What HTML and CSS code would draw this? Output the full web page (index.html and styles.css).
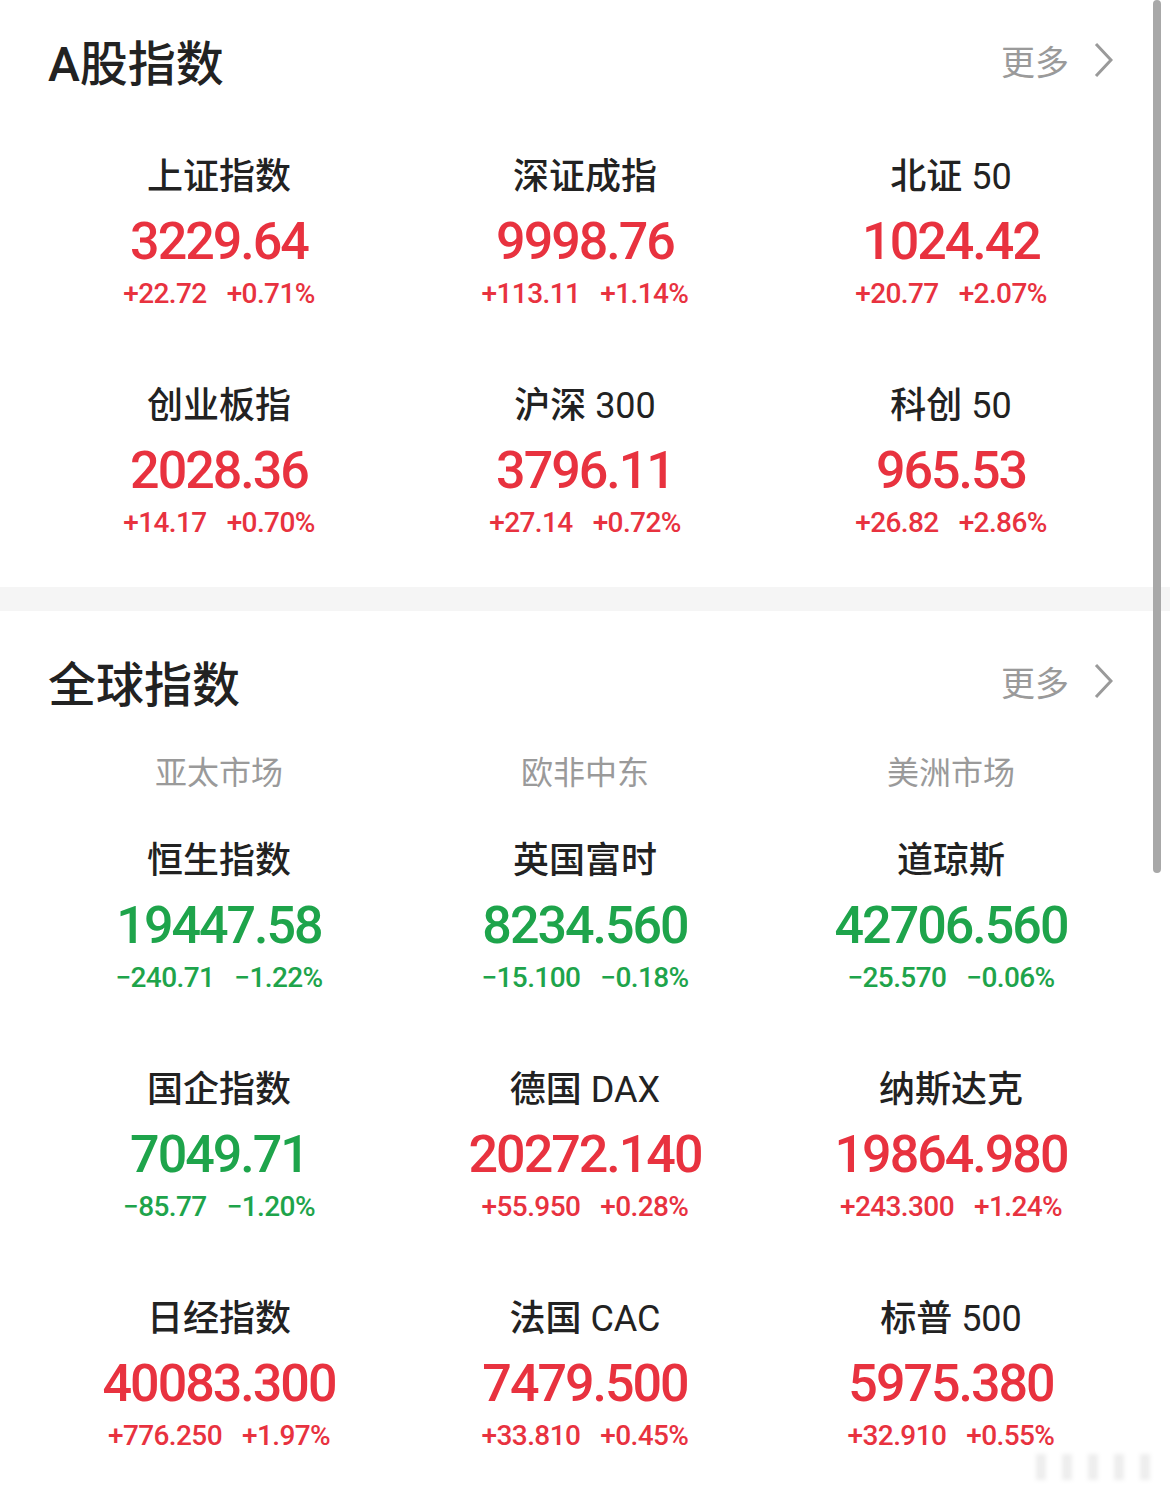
FILE: index.html
```html
<!DOCTYPE html>
<html lang="zh-CN">

<head>
    <meta charset="UTF-8">
    <meta name="viewport" content="width=device-width, initial-scale=1.0">
    <title>指数</title>
    <link rel="stylesheet" href="styles.css">
</head>

<body>
    <!-- A股指数 -->
    <div class="section section-a">
        <div class="section-head">
            <h2 class="section-title">A股指数</h2>
            <a class="more" href="#">更多
                <svg class="chevron" viewBox="0 0 20 36" width="20" height="36">
                    <polyline points="3,2 18,18 3,34" fill="none" stroke="#9a9a9a" stroke-width="3" />
                </svg>
            </a>
        </div>
        <div class="grid">
            <div class="tile">
                <div class="name">上证指数</div>
                <div class="value up">3229.64</div>
                <div class="change up"><span>+22.72</span><span>+0.71%</span></div>
            </div>
            <div class="tile">
                <div class="name">深证成指</div>
                <div class="value up">9998.76</div>
                <div class="change up"><span>+113.11</span><span>+1.14%</span></div>
            </div>
            <div class="tile">
                <div class="name">北证 <span class="lat">50</span></div>
                <div class="value up">1024.42</div>
                <div class="change up"><span>+20.77</span><span>+2.07%</span></div>
            </div>
            <div class="tile">
                <div class="name">创业板指</div>
                <div class="value up">2028.36</div>
                <div class="change up"><span>+14.17</span><span>+0.70%</span></div>
            </div>
            <div class="tile">
                <div class="name">沪深 <span class="lat">300</span></div>
                <div class="value up">3796.11</div>
                <div class="change up"><span>+27.14</span><span>+0.72%</span></div>
            </div>
            <div class="tile">
                <div class="name">科创 <span class="lat">50</span></div>
                <div class="value up">965.53</div>
                <div class="change up"><span>+26.82</span><span>+2.86%</span></div>
            </div>
        </div>
    </div>

    <div class="divider"></div>

    <!-- 全球指数 -->
    <div class="section section-global">
        <div class="section-head tall">
            <h2 class="section-title">全球指数</h2>
            <a class="more" href="#">更多
                <svg class="chevron" viewBox="0 0 20 36" width="20" height="36">
                    <polyline points="3,2 18,18 3,34" fill="none" stroke="#9a9a9a" stroke-width="3" />
                </svg>
            </a>
        </div>
        <div class="tabs">
            <div class="tab">亚太市场</div>
            <div class="tab">欧非中东</div>
            <div class="tab">美洲市场</div>
        </div>
        <div class="grid">
            <div class="tile">
                <div class="name">恒生指数</div>
                <div class="value down">19447.58</div>
                <div class="change down"><span>−240.71</span><span>−1.22%</span></div>
            </div>
            <div class="tile">
                <div class="name">英国富时</div>
                <div class="value down">8234.560</div>
                <div class="change down"><span>−15.100</span><span>−0.18%</span></div>
            </div>
            <div class="tile">
                <div class="name">道琼斯</div>
                <div class="value down">42706.560</div>
                <div class="change down"><span>−25.570</span><span>−0.06%</span></div>
            </div>
            <div class="tile">
                <div class="name">国企指数</div>
                <div class="value down">7049.71</div>
                <div class="change down"><span>−85.77</span><span>−1.20%</span></div>
            </div>
            <div class="tile">
                <div class="name">德国 <span class="lat">DAX</span></div>
                <div class="value up">20272.140</div>
                <div class="change up"><span>+55.950</span><span>+0.28%</span></div>
            </div>
            <div class="tile">
                <div class="name">纳斯达克</div>
                <div class="value up">19864.980</div>
                <div class="change up"><span>+243.300</span><span>+1.24%</span></div>
            </div>
            <div class="tile">
                <div class="name">日经指数</div>
                <div class="value up">40083.300</div>
                <div class="change up"><span>+776.250</span><span>+1.97%</span></div>
            </div>
            <div class="tile">
                <div class="name">法国 <span class="lat">CAC</span></div>
                <div class="value up">7479.500</div>
                <div class="change up"><span>+33.810</span><span>+0.45%</span></div>
            </div>
            <div class="tile">
                <div class="name">标普 <span class="lat">500</span></div>
                <div class="value up">5975.380</div>
                <div class="change up"><span>+32.910</span><span>+0.55%</span></div>
            </div>
        </div>
    </div>

    <!-- Scrollbar and watermark overlays -->
    <div class="scrollbar"></div>
    <div class="watermark">
        <span></span><span></span><span></span><span></span><span></span>
    </div>
</body>

</html>
```

FILE: styles.css
```css
/* Page */
body {
    margin: 0;
    padding: 0;
    background-color: #ffffff;
    font-family: Roboto, "Noto Sans CJK SC", sans-serif;
    color: #222222;
    position: relative;
    width: 1170px;
    overflow: hidden;
}

/* Section blocks */
.section {
    padding: 0 36px;
}

.section-a {
    padding-bottom: 52px;
}

.section-global {
    padding-bottom: 45px;
}

.section-head {
    height: 120px;
    display: flex;
    align-items: center;
    justify-content: space-between;
    padding: 0 21px 0 12px;
}

.section-head.tall {
    height: 140px;
}

.section-title {
    margin: 0;
    font-size: 48px;
    font-weight: 500;
    color: #222222;
}

/* "更多" link */
.more {
    display: flex;
    align-items: center;
    gap: 24px;
    font-size: 34px;
    color: #9a9a9a;
    text-decoration: none;
    font-family: "Noto Sans CJK SC", sans-serif;
}

.chevron {
    display: block;
}

/* Gray separator */
.divider {
    height: 24px;
    background-color: #f5f5f5;
}

/* Region tabs */
.tabs {
    display: grid;
    grid-template-columns: repeat(3, 1fr);
    margin-bottom: 47px;
}

.tab {
    text-align: center;
    font-size: 32px;
    line-height: 38px;
    color: #9a9a9a;
    font-family: "Noto Sans CJK SC", sans-serif;
}

/* Index tiles */
.grid {
    display: grid;
    grid-template-columns: repeat(3, 1fr);
    row-gap: 75px;
}

.section-a .grid {
    margin-top: 32px;
}

.tile {
    display: flex;
    flex-direction: column;
    align-items: center;
}

.name {
    font-size: 36px;
    line-height: 50px;
    font-weight: 500;
    color: #222222;
    white-space: pre;
}

.name .lat {
    font-weight: 400;
}

.value {
    font-size: 52px;
    line-height: 80px;
    font-weight: 500;
    letter-spacing: -2px;
}

.change {
    display: flex;
    gap: 20px;
    font-size: 28px;
    line-height: 24px;
    font-weight: 500;
    letter-spacing: -0.6px;
}

.up {
    color: #e8323f;
}

.down {
    color: #1ea44b;
}

/* Overlays */
.scrollbar {
    position: absolute;
    top: 0;
    left: 1153px;
    width: 8px;
    height: 873px;
    border-radius: 4px;
    background-color: #a8a8a8;
}

.watermark {
    position: absolute;
    left: 1036px;
    top: 1454px;
    display: flex;
    gap: 16px;
    filter: blur(2px);
    opacity: 0.18;
}

.watermark span {
    display: block;
    width: 10px;
    height: 26px;
    background-color: #a0a0a0;
}
```
